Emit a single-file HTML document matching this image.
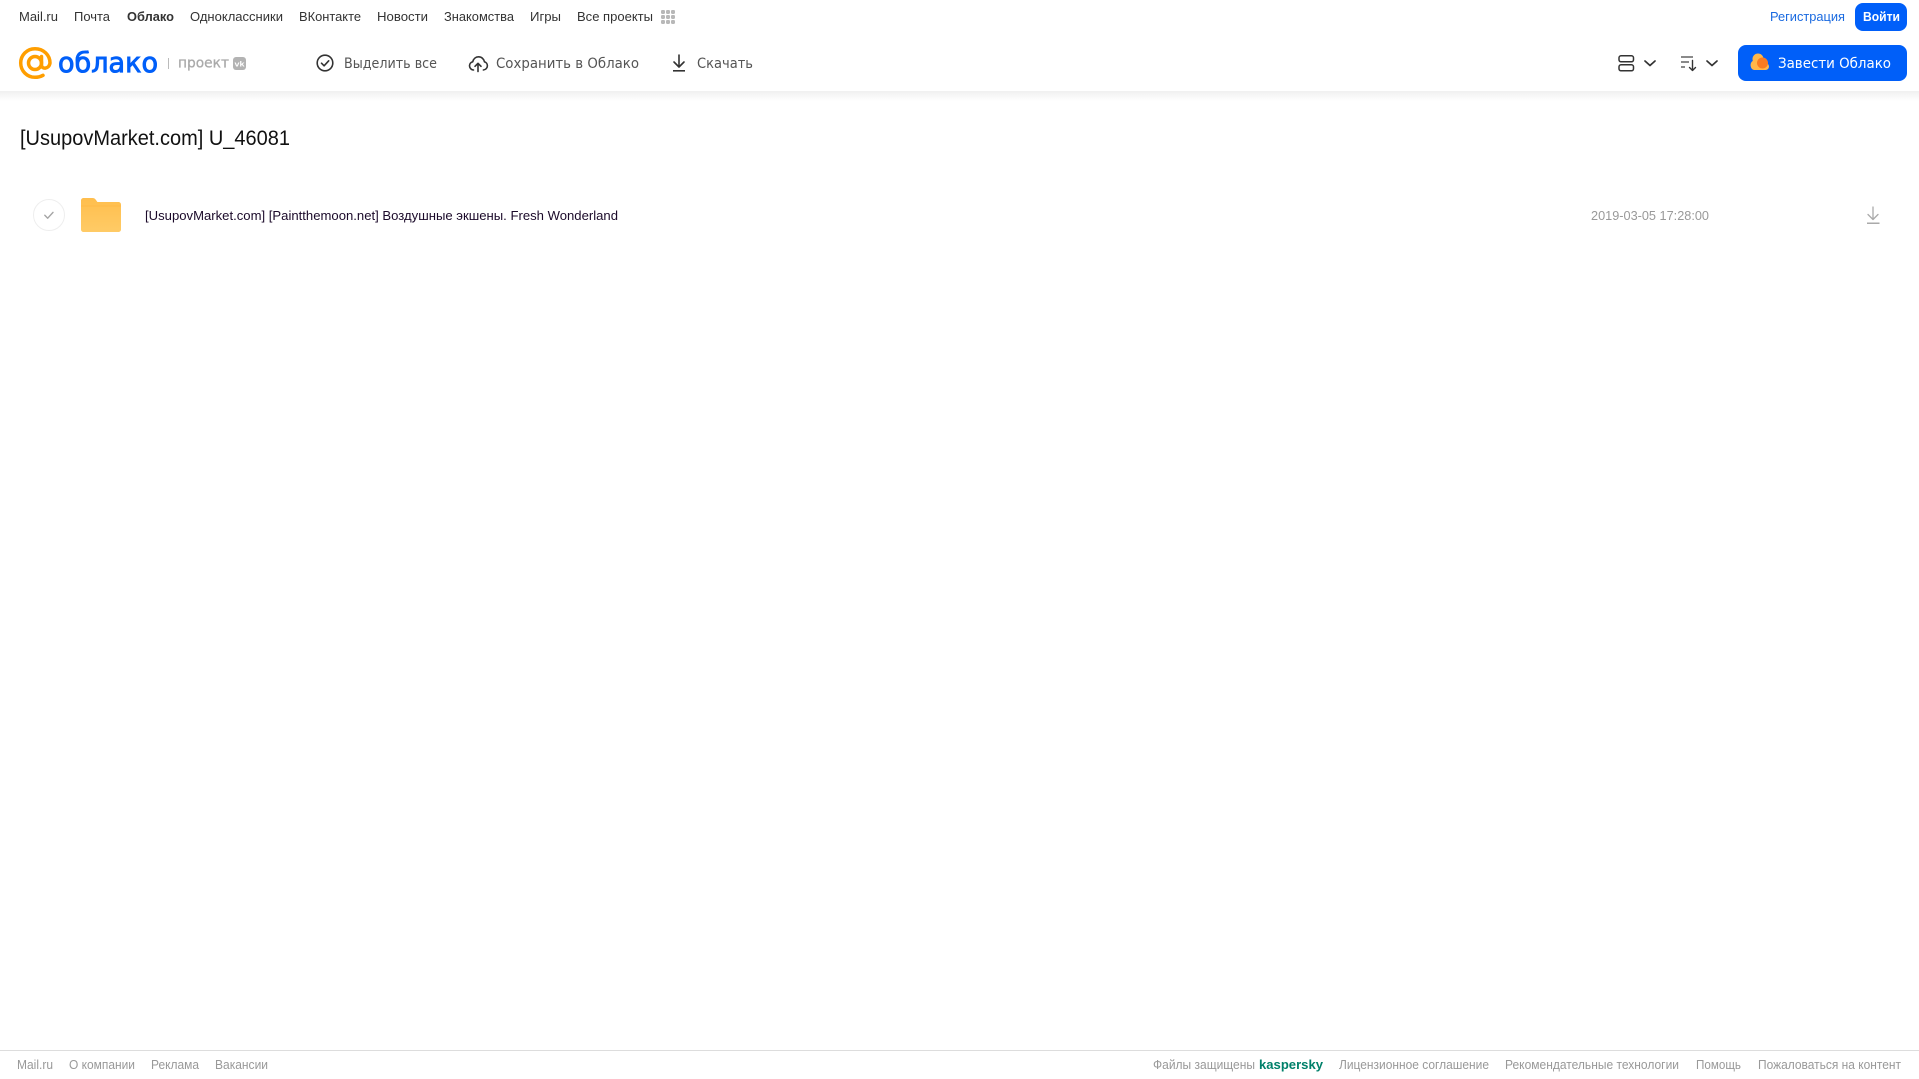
<!DOCTYPE html>
<html lang="ru">
<head>
<meta charset="utf-8">
<title>Облако</title>
<style>
html,body{margin:0;padding:0;background:#fff;width:1919px;height:1079px;overflow:hidden}
svg{display:block;position:absolute;left:0;top:0}
text{font-family:"Liberation Sans","DejaVu Sans",sans-serif}
.n{font-size:13px;fill:#333}
.h{font-size:14px;fill:#555;font-family:"DejaVu Sans",sans-serif}
.f{font-size:12.500px;fill:#999}
</style>
</head>
<body>
<svg width="1919" height="1079" viewBox="0 0 1919 1079" xmlns="http://www.w3.org/2000/svg">
<defs>
<linearGradient id="sh" x1="0" y1="0" x2="0" y2="1"><stop offset="0" stop-color="#f0f0f0"/><stop offset="1" stop-color="#fff"/></linearGradient>
<linearGradient id="fo" x1="0" y1="0" x2="0" y2="1"><stop offset="0" stop-color="#ffbe4d"/><stop offset="1" stop-color="#ffcb66"/></linearGradient>
</defs>
<rect x="0" y="91" width="1919" height="10" fill="url(#sh)"/>

<!-- top nav -->
<text class="n" x="19" y="21" textLength="39" lengthAdjust="spacingAndGlyphs">Mail.ru</text>
<text class="n" x="74" y="21" textLength="36" lengthAdjust="spacingAndGlyphs">Почта</text>
<text class="n" x="127" y="21" textLength="47" lengthAdjust="spacingAndGlyphs" font-weight="700">Облако</text>
<text class="n" x="190" y="21" textLength="93" lengthAdjust="spacingAndGlyphs">Одноклассники</text>
<text class="n" x="299" y="21" textLength="62" lengthAdjust="spacingAndGlyphs">ВКонтакте</text>
<text class="n" x="377" y="21" textLength="51" lengthAdjust="spacingAndGlyphs">Новости</text>
<text class="n" x="444" y="21" textLength="70" lengthAdjust="spacingAndGlyphs">Знакомства</text>
<text class="n" x="530" y="21" textLength="31" lengthAdjust="spacingAndGlyphs">Игры</text>
<text class="n" x="577" y="21" textLength="76" lengthAdjust="spacingAndGlyphs">Все проекты</text>
<g fill="#b8b8b8">
<rect x="661" y="10" width="4" height="4" rx="1.200"/><rect x="666" y="10" width="4" height="4" rx="1.200"/><rect x="671" y="10" width="4" height="4" rx="1.200"/>
<rect x="661" y="15" width="4" height="4" rx="1.200"/><rect x="666" y="15" width="4" height="4" rx="1.200"/><rect x="671" y="15" width="4" height="4" rx="1.200"/>
<rect x="661" y="20" width="4" height="4" rx="1.200"/><rect x="666" y="20" width="4" height="4" rx="1.200"/><rect x="671" y="20" width="4" height="4" rx="1.200"/>
</g>
<text x="1770" y="21" font-size="13" fill="#1a6ae0" textLength="75" lengthAdjust="spacingAndGlyphs">Регистрация</text>
<rect x="1855" y="3" width="52" height="28" rx="8" fill="#005ff9"/>
<text x="1863" y="21" font-size="13" font-weight="700" fill="#fff" textLength="37" lengthAdjust="spacingAndGlyphs">Войти</text>

<!-- logo -->
<circle cx="35" cy="63" r="6.500" fill="none" stroke="#ff9e00" stroke-width="3.500"/>
<path d="M41.500 56.500v8.500c0 4.500 7.500 4.500 8.500-2 0-8-6.500-14.300-15-14.300-8 0-14.300 6.400-14.300 14.300S27 77.300 35 77.300c3 0 5.500-.6 8-2" fill="none" stroke="#ff9e00" stroke-width="3.500" stroke-linecap="round"/>
<text x="58" y="72" font-size="28" fill="#005ff9" stroke="#005ff9" stroke-width=".9" textLength="100" lengthAdjust="spacingAndGlyphs" style="font-family:'DejaVu Sans',sans-serif">облако</text>
<rect x="168" y="58" width="1" height="11" fill="#bbb"/>
<text x="178" y="67.500" font-size="14" fill="#aaa" stroke="#aaa" stroke-width=".3" textLength="51" lengthAdjust="spacingAndGlyphs" style="font-family:'DejaVu Sans',sans-serif">проект</text>
<rect x="233" y="57" width="13" height="13" rx="3" fill="#b3b3b3"/>
<text x="234.500" y="66.500" font-size="7.500" font-weight="700" fill="#fff" textLength="10" lengthAdjust="spacingAndGlyphs">vk</text>

<!-- toolbar -->
<circle cx="325" cy="63" r="7.800" fill="none" stroke="#333" stroke-width="1.600"/>
<path d="M321.500 63.200l2.600 2.600 4.600-5" fill="none" stroke="#333" stroke-width="1.600" stroke-linecap="round" stroke-linejoin="round"/>
<text class="h" x="344" y="68" textLength="93" lengthAdjust="spacingAndGlyphs">Выделить все</text>
<path d="M473.500 70c-2.300-.2-4-2-4-4.200 0-2 1.300-3.600 3.200-4 .6-3 3-5 5.800-5 3.100 0 5.400 2.100 5.900 5 1.700.4 3 2 3 3.900 0 2.300-1.700 4.100-4 4.300" fill="none" stroke="#333" stroke-width="1.600" stroke-linecap="round" stroke-linejoin="round"/>
<path d="M478 71.500v-8M475 66.300l3-3 3 3" fill="none" stroke="#333" stroke-width="1.600" stroke-linecap="round" stroke-linejoin="round"/>
<text class="h" x="496" y="68" textLength="143" lengthAdjust="spacingAndGlyphs">Сохранить в Облако</text>
<path d="M679 55v11.500M674 62l5 5 5-5" fill="none" stroke="#333" stroke-width="1.600" stroke-linecap="round" stroke-linejoin="round"/>
<rect x="673" y="70" width="12" height="1.600" fill="#333"/>
<text class="h" x="697" y="68" textLength="56" lengthAdjust="spacingAndGlyphs">Скачать</text>

<!-- view/sort -->
<rect x="1619" y="55.800" width="14.500" height="6" rx="2" fill="none" stroke="#333" stroke-width="1.500"/>
<rect x="1619" y="64.800" width="14.500" height="6" rx="2" fill="none" stroke="#333" stroke-width="1.500"/>
<path d="M1645 61l5 4.500 5-4.500" fill="none" stroke="#333" stroke-width="1.700" stroke-linecap="round" stroke-linejoin="round"/>
<path d="M1681 57h12M1681 62h8M1681 67h4" fill="none" stroke="#444" stroke-width="1.300"/>
<path d="M1692.500 60.500v9.500M1689.500 67.500l3 3 3-3" fill="none" stroke="#333" stroke-width="1.400" stroke-linecap="round" stroke-linejoin="round"/>
<path d="M1707 61l5 4.500 5-4.500" fill="none" stroke="#333" stroke-width="1.700" stroke-linecap="round" stroke-linejoin="round"/>

<rect x="1738" y="45" width="169" height="36" rx="8" fill="#005ff9"/>
<circle cx="1758" cy="59" r="5.500" fill="#ffb74a"/>
<circle cx="1755.500" cy="65" r="5" fill="#ffb74a"/>
<rect x="1751" y="63" width="18" height="7" rx="3.500" fill="#ffb74a"/>
<circle cx="1762.500" cy="63" r="5.500" fill="#f97b22"/>
<text x="1778" y="68" font-size="14" fill="#fff" textLength="113" lengthAdjust="spacingAndGlyphs" style="font-family:'DejaVu Sans',sans-serif">Завести Облако</text>

<!-- title -->
<text x="20" y="145" font-size="21.500" fill="#111" textLength="270" lengthAdjust="spacingAndGlyphs">[UsupovMarket.com] U_46081</text>

<!-- row -->
<circle cx="49" cy="215" r="15.500" fill="#fff" stroke="#eee" stroke-width="1"/>
<path d="M44.800 215.300l2.900 2.900 5.300-5.800" fill="none" stroke="#a5a5a5" stroke-width="1.400" stroke-linecap="round" stroke-linejoin="round"/>
<path d="M81 200.500c0-1.400 1.100-2.500 2.500-2.500h9c1.500 0 2.400.6 3.300 1.700l1.600 2.300h21.100c1.400 0 2.500 1.100 2.500 2.500v25c0 1.400-1.100 2.500-2.500 2.500h-35c-1.400 0-2.500-1.100-2.500-2.500z" fill="url(#fo)"/>
<path d="M81 206h40" stroke="#ffb53f" stroke-width="1" opacity=".6"/>
<text x="145" y="220" font-size="13" fill="#1b0a2a" textLength="473" lengthAdjust="spacingAndGlyphs">[UsupovMarket.com] [Paintthemoon.net] Воздушные экшены. Fresh Wonderland</text>
<text x="1591" y="220" font-size="13" fill="#999" textLength="118" lengthAdjust="spacingAndGlyphs">2019-03-05 17:28:00</text>
<path d="M1873 207v12M1868 214.500l5 5 5-5" fill="none" stroke="#aaa" stroke-width="1.300" stroke-linecap="round" stroke-linejoin="round"/>
<rect x="1867" y="222.500" width="12.500" height="1.500" fill="#aaa"/>

<!-- footer -->
<rect x="0" y="1050" width="1919" height="1" fill="#ddd"/>
<text class="f" x="17" y="1069" textLength="36" lengthAdjust="spacingAndGlyphs">Mail.ru</text>
<text class="f" x="69" y="1069" textLength="66" lengthAdjust="spacingAndGlyphs">О компании</text>
<text class="f" x="151" y="1069" textLength="48" lengthAdjust="spacingAndGlyphs">Реклама</text>
<text class="f" x="215" y="1069" textLength="53" lengthAdjust="spacingAndGlyphs">Вакансии</text>
<text class="f" x="1153" y="1069" textLength="102" lengthAdjust="spacingAndGlyphs">Файлы защищены</text>
<text x="1259" y="1069" font-size="13" font-weight="700" fill="#00806a" textLength="64" lengthAdjust="spacingAndGlyphs">kaspersky</text>
<text class="f" x="1339" y="1069" textLength="150" lengthAdjust="spacingAndGlyphs">Лицензионное соглашение</text>
<text class="f" x="1505" y="1069" textLength="174" lengthAdjust="spacingAndGlyphs">Рекомендательные технологии</text>
<text class="f" x="1696" y="1069" textLength="45" lengthAdjust="spacingAndGlyphs">Помощь</text>
<text class="f" x="1758" y="1069" textLength="143" lengthAdjust="spacingAndGlyphs">Пожаловаться на контент</text>
</svg>
</body>
</html>
